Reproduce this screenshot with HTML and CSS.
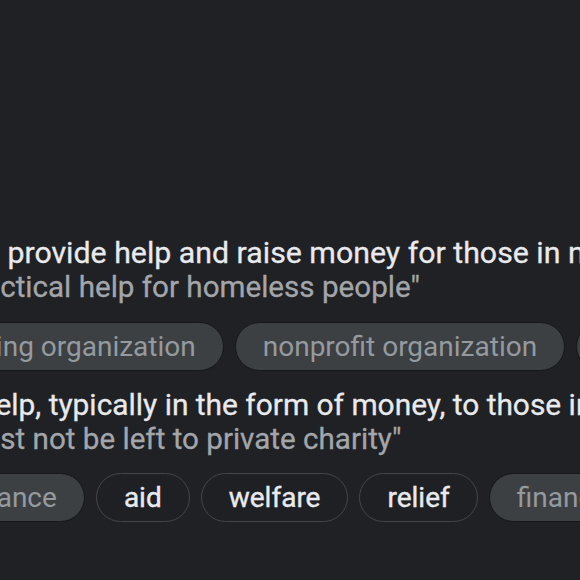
FILE: index.html
```html
<!DOCTYPE html>
<html lang="en">
<head>
<meta charset="utf-8">
<title>charity</title>
<link rel="stylesheet" href="styles.css">
</head>
<body>
<main class="page">
  <section class="sense sense-one">
    <div class="definition line-a">to provide help and raise money for those in need.</div>
    <div class="example line-b">practical help for homeless people"</div>
    <div class="chips chips-a">
      <span class="chip chip-muted">fundraising organization</span>
      <span class="chip chip-muted">nonprofit organization</span>
      <span class="chip chip-muted">not-for-profit organization</span>
    </div>
  </section>
  <section class="sense sense-two">
    <div class="definition line-c">help, typically in the form of money, to those in need.</div>
    <div class="example line-d">must not be left to private charity"</div>
    <div class="chips chips-b">
      <span class="chip chip-muted">financial assistance</span>
      <span class="chip chip-link">aid</span>
      <span class="chip chip-link">welfare</span>
      <span class="chip chip-link">relief</span>
      <span class="chip chip-muted">financial relief</span>
    </div>
  </section>
</main>
</body>
</html>
```
FILE: styles.css
```css
html, body {
  margin: 0;
  padding: 0;
  background: #202124;
  overflow: hidden;
  width: 580px;
  height: 580px;
}

.page {
  font-family: Roboto, "Liberation Sans", sans-serif;
  padding-top: 235px;
}

.sense {
  display: flex;
  flex-direction: column;
}

.definition,
.example {
  line-height: 35px;
  white-space: nowrap;
  -webkit-text-stroke: 0.3px currentColor;
}

.definition {
  font-size: 30.3px;
  color: #e8eaed;
}

.example {
  font-size: 29.6px;
  color: #a2a6ab;
}

.line-a { margin-left: -27px; }
.line-b { margin-left: -42px; }
.line-c {
  margin-left: -21px;
  font-size: 29.9px;
}
.line-d { margin-left: -42px; }

.chips {
  display: flex;
  gap: 11px;
  white-space: nowrap;
  margin-top: 17px;
}

.chips-a {
  margin-left: -134px;
}

.chips-b {
  margin-left: -218px;
  margin-top: 16px;
}

.sense-two {
  margin-top: 16px;
}

.chip {
  flex: none;
  box-sizing: border-box;
  height: 49px;
  display: inline-flex;
  align-items: center;
  padding: 0 27px;
  border-radius: 25px;
  font-size: 28px;
}

.chip-muted {
  background: #3c4043;
  color: #959a9f;
  border: 1px solid #151618;
}

.chip-link {
  background: #1f2023;
  color: #e8eaed;
  border: 1px solid #43464b;
  -webkit-text-stroke: 0.4px currentColor;
}
```
